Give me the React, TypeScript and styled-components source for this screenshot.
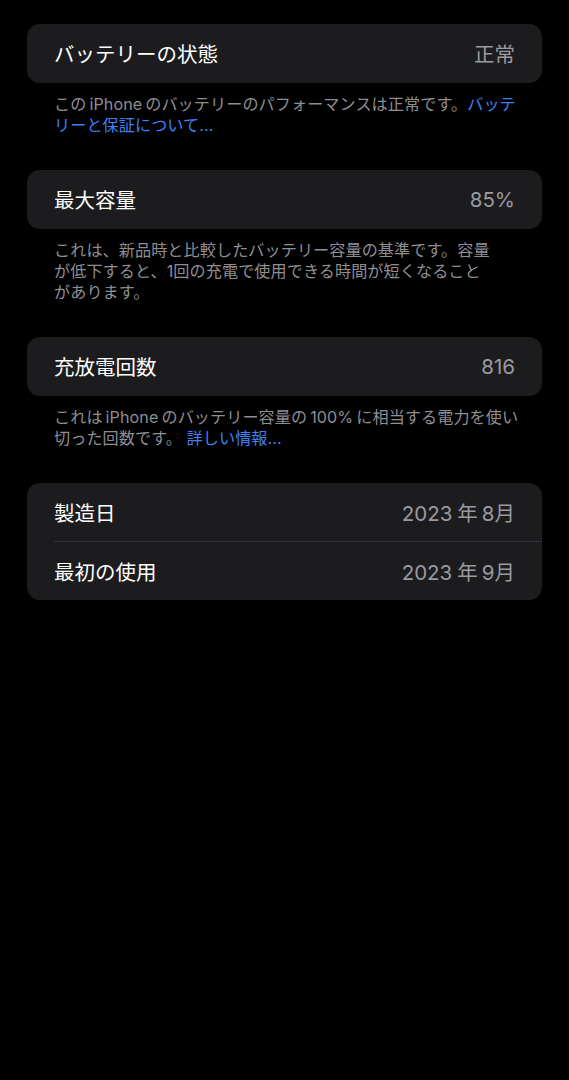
import React from "react";
import styled, { createGlobalStyle } from "styled-components";

const GlobalStyle = createGlobalStyle`
  html, body {
    margin: 0;
    padding: 0;
    background: #000;
  }
  body {
    font-family: "Inter", "Noto Sans CJK JP", sans-serif;
    -webkit-font-smoothing: antialiased;
  }
`;

const Page = styled.div`
  min-height: 1080px;
  background: #000;
  padding: 24px 27px 0;
  box-sizing: border-box;
  display: flex;
  flex-direction: column;
`;

const Section = styled.section`
  display: flex;
  flex-direction: column;
`;

const Card = styled.div`
  background: #1c1c1e;
  border-radius: 13px;
  overflow: hidden;
  display: flex;
  flex-direction: column;
`;

const Row = styled.div<{ $divider?: boolean }>`
  height: 58.5px;
  display: flex;
  align-items: center;
  justify-content: space-between;
  padding: 0 27px;
  position: relative;
  ${(p) =>
    p.$divider
      ? `
    &::after {
      content: "";
      position: absolute;
      left: 27px;
      right: 0;
      bottom: 0;
      height: 1px;
      background: #323236;
    }
  `
      : ""}
`;

const Label = styled.span`
  color: #ffffff;
  font-size: 20.5px;
`;

const Value = styled.span`
  color: #9a9aa0;
  font-size: 20.5px;
`;

const Footer = styled.p`
  margin: 11px 0 34.5px;
  padding: 0 27px;
  color: #8e8e94;
  font-size: 16.1px;
  line-height: 21px;
  letter-spacing: 0.1px;
  white-space: nowrap;
`;

const Link = styled.span`
  color: #3d82f4;
`;

const Gap = styled.span<{ $w?: number }>`
  display: inline-block;
  width: ${(p) => p.$w ?? 3}px;
`;

export default function App() {
  return (
    <>
      <GlobalStyle />
      <Page>
        <Section>
          <Card>
            <Row>
              <Label>バッテリーの状態</Label>
              <Value>正常</Value>
            </Row>
          </Card>
          <Footer>
            この<Gap />iPhone<Gap />のバッテリーのパフォーマンスは正常です。<Link>バッテ
            <br />
            リーと保証について...</Link>
          </Footer>
        </Section>

        <Section>
          <Card>
            <Row>
              <Label>最大容量</Label>
              <Value>85%</Value>
            </Row>
          </Card>
          <Footer>
            これは、新品時と比較したバッテリー容量の基準です。容量
            <br />
            が低下すると、1回の充電で使用できる時間が短くなること
            <br />
            があります。
          </Footer>
        </Section>

        <Section>
          <Card>
            <Row>
              <Label>充放電回数</Label>
              <Value>816</Value>
            </Row>
          </Card>
          <Footer>
            これは<Gap />iPhone<Gap />のバッテリー容量の<Gap />100%<Gap />に相当する電力を使い
            <br />
            切った回数です。 <Link>詳しい情報...</Link>
          </Footer>
        </Section>

        <Section>
          <Card>
            <Row $divider>
              <Label>製造日</Label>
              <Value>2023<Gap $w={5} />年<Gap $w={4} />8月</Value>
            </Row>
            <Row>
              <Label>最初の使用</Label>
              <Value>2023<Gap $w={5} />年<Gap $w={4} />9月</Value>
            </Row>
          </Card>
        </Section>
      </Page>
    </>
  );
}
